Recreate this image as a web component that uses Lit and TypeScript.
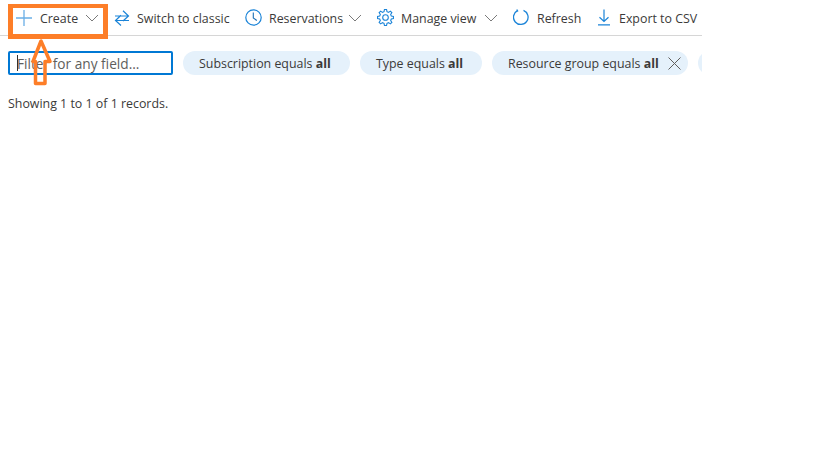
import { LitElement, html, css } from "lit";
import { customElement } from "lit/decorators.js";

const chevron = html`<svg class="chev" width="14" height="8" viewBox="0 0 14 8"><path d="M1 1l6 6 6-6" fill="none" stroke="#7a7a7a" stroke-width="1"/></svg>`;

function gearPath(cx: number, cy: number, outer: number, inner: number, teeth: number): string {
  const pts: string[] = [];
  const step = (Math.PI * 2) / teeth;
  for (let i = 0; i < teeth; i++) {
    const a = i * step - Math.PI / 2;
    const list: [number, number][] = [
      [inner, a - step * 0.32],
      [outer, a - step * 0.17],
      [outer, a + step * 0.17],
      [inner, a + step * 0.32],
    ];
    for (const [r, t] of list) {
      pts.push(`${(cx + r * Math.cos(t)).toFixed(2)} ${(cy + r * Math.sin(t)).toFixed(2)}`);
    }
  }
  return "M" + pts.join("L") + "Z";
}

@customElement("app-root")
export class AppRoot extends LitElement {
  static styles = css`
    :host { display: block; width: 819px; height: 460px; background: #fff; position: relative; overflow: hidden;
      font-family: "Open Sans", "Noto Sans", sans-serif; font-size: 12.4px; color: #3b3a39; }
    .page { width: 702px; padding-left: 8px; box-sizing: border-box; overflow: hidden; }
    .bar { display: flex; align-items: center; height: 35px; margin-left: -8px; padding-left: 8px; border-bottom: 1px solid #d6d6d6; white-space: nowrap; }
    .cmd { display: flex; align-items: center; flex: none; }
    .cmd svg.ic { flex: none; display: block; }
    .cmd span { display: block; padding-top: 2px; }
    .chev { flex: none; }
    .c1 { margin-left: 8px; }
    .c1 span { margin-left: 8px; width: 37px; }
    .c1 .chev { margin-left: 8px; }
    .c2 { margin-left: 15px; }
    .c2 span { margin-left: 7px; width: 92px; }
    .c3 { margin-left: 16px; }
    .c3 span { margin-left: 7px; width: 72px; }
    .c3 .chev { margin-left: 7px; }
    .c4 { margin-left: 15px; }
    .c4 span { margin-left: 7px; width: 77px; }
    .c4 .chev { margin-left: 6px; }
    .c5 { margin-left: 15px; }
    .c5 span { margin-left: 8px; width: 43px; }
    .c6 { margin-left: 17px; }
    .c6 span { margin-left: 8px; }
    .filters { display: flex; align-items: center; gap: 10px; margin-top: 15px; white-space: nowrap; }
    .input { flex: none; width: 165px; height: 24px; box-sizing: border-box; border: 2px solid #0078d4; border-radius: 2px; display: flex; align-items: center; padding-left: 7px; color: #605e5c; position: relative; font-size: 13.7px; }
    .caret { position: absolute; left: 7px; top: 2px; width: 1px; height: 16px; background: #323130; }
    .chip { flex: none; height: 24px; border-radius: 12px; background: #e5f1fb; display: flex; align-items: center; padding-left: 16px; box-sizing: border-box; white-space: pre; }
    .chip b { font-weight: 700; }
    .s1 { width: 167px; }
    .s2 { width: 122px; }
    .s3 { width: 196px; }
    .s3 svg { margin-left: 9px; flex: none; }
    .s4 { width: 60px; }
    .rec { margin-top: 21px; line-height: 16px; }
    .box { position: absolute; left: 8px; top: 4px; width: 100px; height: 35px; box-sizing: border-box; border: 5px solid #fd7e28; border-top-width: 4px; }
    .arrow { position: absolute; left: 28px; top: 36px; }
  `;

  render() {
    return html`
      <div class="page">
        <div class="bar">
          <div class="cmd c1">
            <svg class="ic" width="16" height="16" viewBox="0 0 16 16"><path d="M8 0v16M0 8h16" stroke="#6aaee6" stroke-width="1.3" fill="none"/></svg>
            <span>Create</span>${chevron}
          </div>
          <div class="cmd c2">
            <svg class="ic" width="16" height="16" viewBox="0 0 16 16"><path d="M1 6h13.500M9 .8l5.500 5.200L9 11M15 10.500H1.500M7 5.300l-5.500 5.200L7 15.500" stroke="#1b84d8" stroke-width="1.200" fill="none"/></svg>
            <span>Switch to classic</span>
          </div>
          <div class="cmd c3">
            <svg class="ic" width="17" height="17" viewBox="0 0 17 17"><circle cx="8.500" cy="8.500" r="7.700" stroke="#1b84d8" stroke-width="1.200" fill="none"/><path d="M8.300 3.500v5.500l3.500 2.500" stroke="#1b6fb5" stroke-width="1.100" fill="none"/></svg>
            <span>Reservations</span>${chevron}
          </div>
          <div class="cmd c4">
            <svg class="ic" width="17" height="17" viewBox="0 0 17 17"><path d=${gearPath(8.5, 8.5, 8, 6, 8)} stroke="#1b84d8" stroke-width="1.100" fill="none"/><circle cx="8.500" cy="8.500" r="2.800" stroke="#1b84d8" stroke-width="1.100" fill="none"/></svg>
            <span>Manage view</span>${chevron}
          </div>
          <div class="cmd c5">
            <svg class="ic" width="16" height="17" viewBox="0 0 16 17"><path d="M10.500 1.400A7.300 7.300 0 1 1 4.400 1.700M3.800.500l.8 1.400-1.500.8" stroke="#1b84d8" stroke-width="1.300" fill="none"/></svg>
            <span>Refresh</span>
          </div>
          <div class="cmd c6">
            <svg class="ic" width="14" height="17" viewBox="0 0 14 17"><path d="M7 .500v12M2.500 8.200L7 12.500l4.500-4.300M1 15.800h12" stroke="#1b84d8" stroke-width="1.200" fill="none"/></svg>
            <span>Export to CSV</span>
          </div>
        </div>
        <div class="filters">
          <div class="input"><i class="caret"></i>Filter for any field...</div>
          <div class="chip s1">Subscription equals <b>all</b></div>
          <div class="chip s2">Type equals <b>all</b></div>
          <div class="chip s3">Resource group equals <b>all</b><svg width="13" height="13" viewBox="0 0 13 13"><path d="M.5.500l12 12M12.500.500l-12 12" stroke="#605e5c" stroke-width="1" fill="none"/></svg></div>
          <div class="chip s4"></div>
        </div>
        <div class="rec">Showing 1 to 1 of 1 records.</div>
      </div>
      <div class="box"></div>
      <svg class="arrow" width="26" height="52" viewBox="0 0 26 52">
        <path d="M13 5L5 25.500h2.500V47.500h9.500V25.500h5z" fill="none" stroke="#fd7e28" stroke-width="3.500" stroke-linejoin="round"/>
      </svg>
    `;
  }
}
